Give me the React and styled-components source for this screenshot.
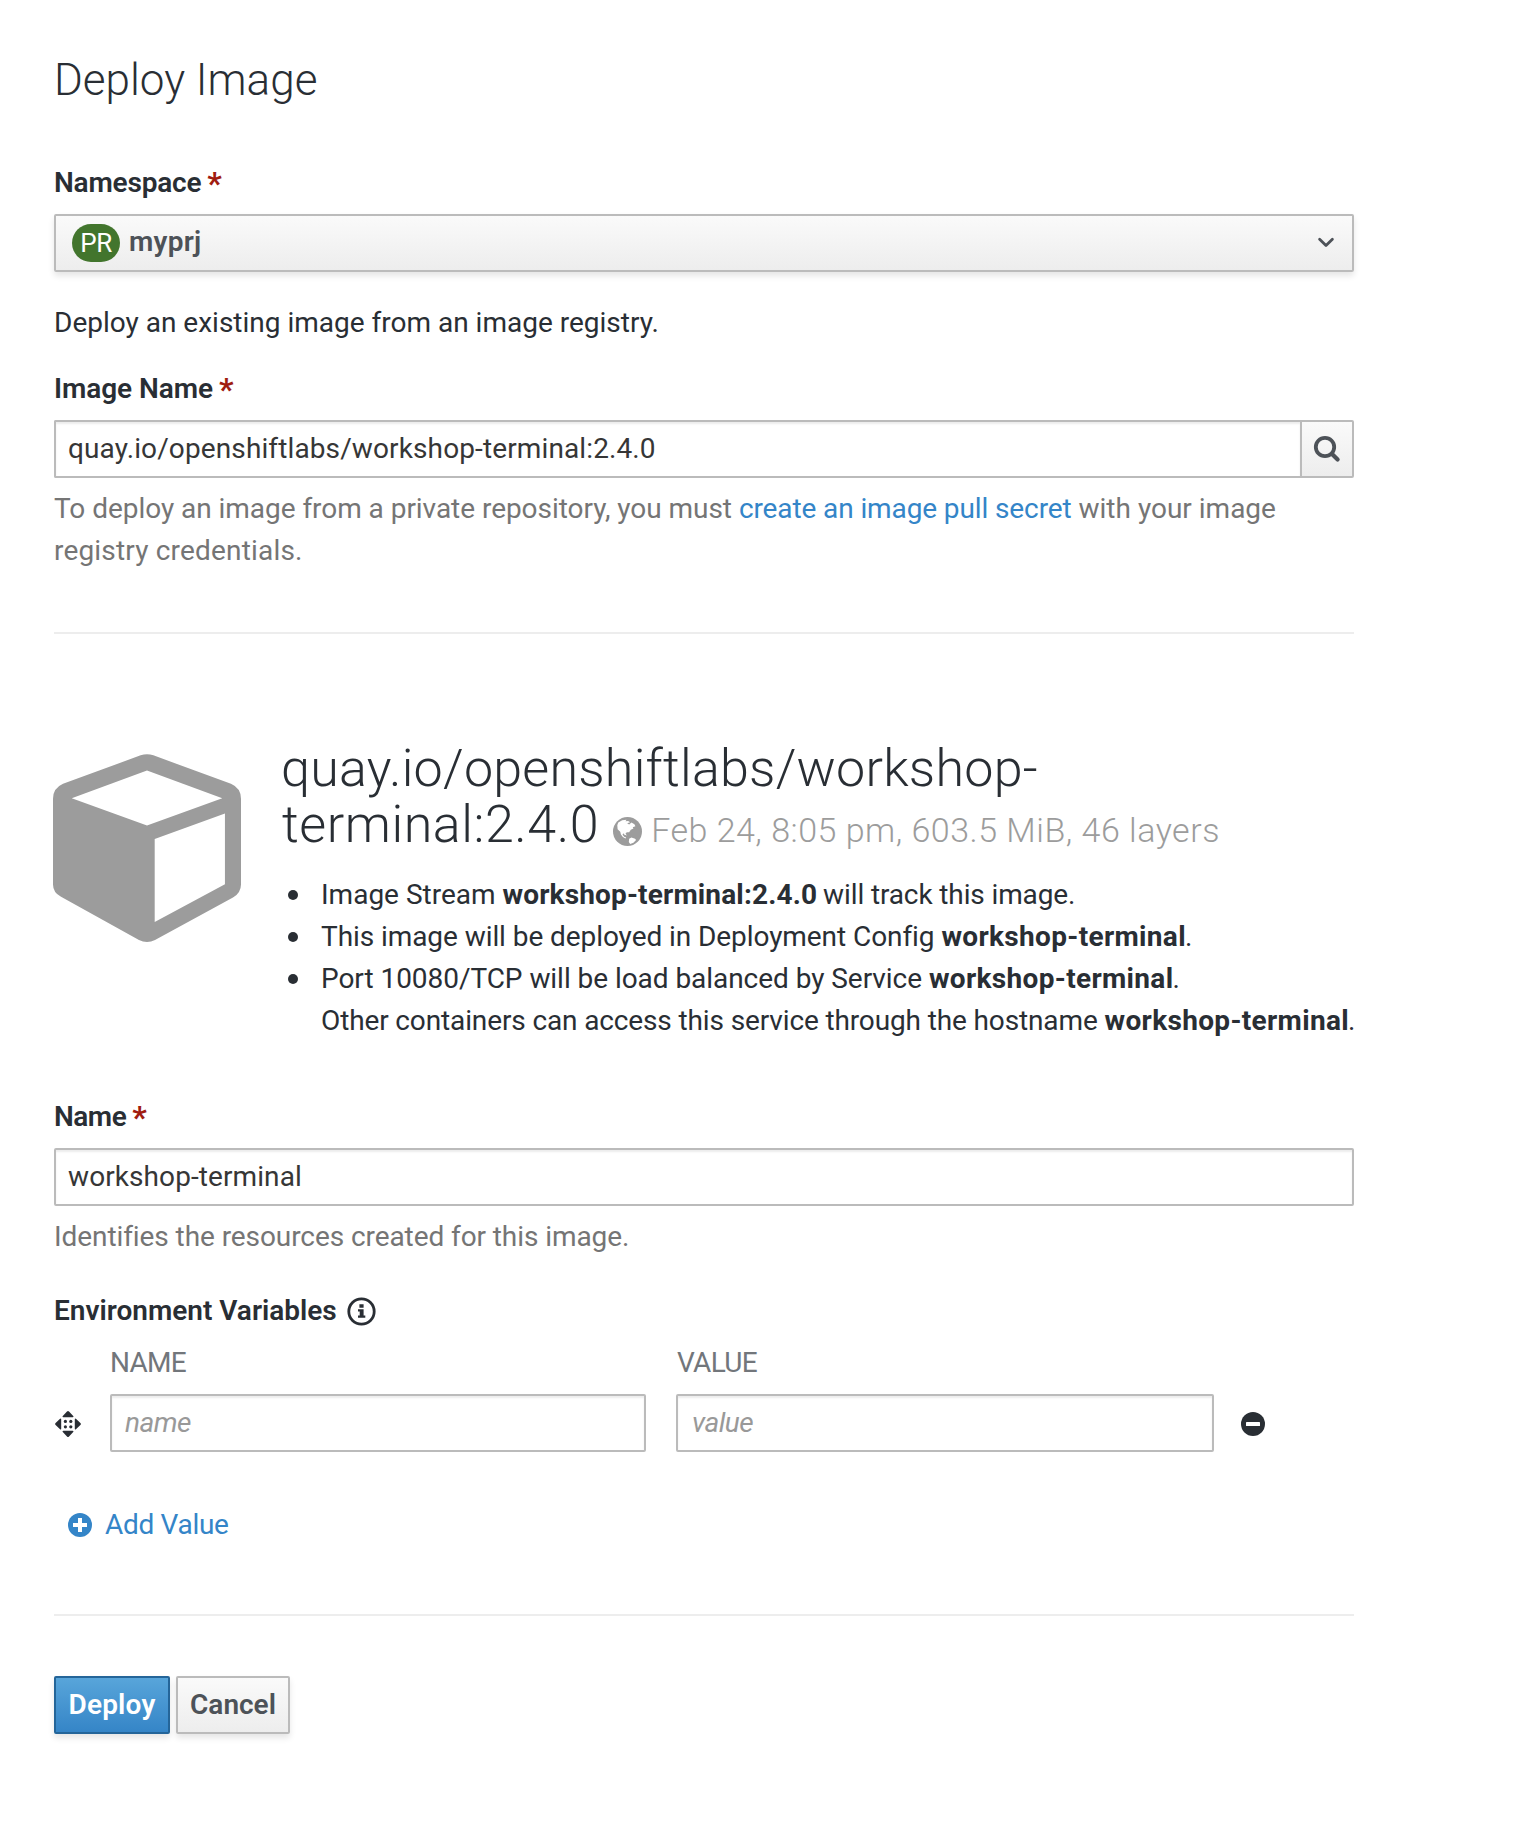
import React from "react";
import styled, { createGlobalStyle, css } from "styled-components";

const GlobalStyle = createGlobalStyle`
  *, *::before, *::after { box-sizing: border-box; }
  body {
    margin: 0;
    background: #fff;
    color: #292e34;
    font-family: Roboto, "Liberation Sans", sans-serif;
    font-size: 28px;
    line-height: 42px;
  }
  svg { display: block; flex: none; }
`;

const Page = styled.main`
  width: 1354px;
  min-height: 1824px;
  padding: 56px 0 0 54px;
`;

const Title = styled.h1`
  margin: 0 0 58px;
  font-size: 44px;
  font-weight: 300;
  line-height: 48px;
`;

const Track = styled.span`
  letter-spacing: ${(p) => p.$ls}px;
  white-space: nowrap;
`;

const Label = styled.label`
  display: flex;
  align-items: center;
  width: fit-content;
  margin-bottom: 10px;
  font-weight: 600;
  letter-spacing: ${(p) => p.$ls || 0}px;
`;

const Required = styled.span`
  margin-left: 6px;
  color: #a01c10;
  font-weight: 700;
  font-size: 32px;
  letter-spacing: 0;
`;

const grey = css`
  background: linear-gradient(#fafafa, #ededed);
  border: 2px solid #bbb;
  color: #4d5258;
`;

const Select = styled.button`
  ${grey}
  display: flex;
  align-items: center;
  width: 100%;
  height: 58px;
  padding: 0 17px 2px 16px;
  border-radius: 2px;
  box-shadow: 0 4px 6px rgba(3, 3, 3, 0.1);
  font: 600 28px/38px Roboto, sans-serif;
  letter-spacing: 0.24px;
  svg { margin: 1px 0 0 auto; }
`;

const Badge = styled.span`
  width: 48px;
  height: 38px;
  margin: 1px 9px 0 0;
  border-radius: 20px;
  background: #42752d;
  color: #fff;
  font-size: 26px;
  font-weight: 400;
  letter-spacing: -0.5px;
  text-align: center;
`;

const Intro = styled.p`
  margin: 30px 0 24px;
`;

const Input = styled.input`
  display: block;
  width: ${(p) => p.$w || "100%"};
  height: 58px;
  padding: 0 12px 2px ${(p) => p.$pl || 12}px;
  border: 2px solid #bbb;
  border-radius: 2px;
  background: #fff;
  box-shadow: inset 0 2px 2px rgba(3, 3, 3, 0.075);
  color: #363636;
  font: 400 28px Roboto, sans-serif;
  letter-spacing: ${(p) => p.$ls || 0}px;
  outline: none;
  &::placeholder { color: #999; font-style: italic; opacity: 1; }
`;

const InputGroup = styled.div`
  display: flex;
  input { flex: 1; border-right: 0; border-radius: 2px 0 0 2px; }
`;

const SearchButton = styled.button`
  ${grey}
  display: flex;
  align-items: center;
  justify-content: center;
  width: 54px;
  height: 58px;
  padding: 0;
  border-radius: 0 2px 2px 0;
`;

const Help = styled.p`
  margin: 10px 0 ${(p) => p.$mb}px;
  color: #757575;
`;

const Link = styled.a`
  color: #3485c8;
  letter-spacing: -0.11px;
`;

const Divider = styled.hr`
  height: 2px;
  margin: 0 0 ${(p) => p.$mb}px;
  border: 0;
  background: #ededed;
`;

const ImageResult = styled.section`
  display: flex;
  margin-bottom: 54px;
  > svg { margin: 13px 40px 0 -1px; }
`;

const ImageInfo = styled.div`
  flex: 1;
  white-space: nowrap;
`;

const ImageTitle = styled.h2`
  margin: 0 0 21px;
  font-size: 52px;
  font-weight: 300;
  line-height: 56px;
`;

const TitleLine = styled.div`
  display: flex;
  align-items: baseline;
  height: 56px;
  padding-left: ${(p) => p.$indent || 0}px;
`;

const ImageMeta = styled.small`
  display: flex;
  align-items: baseline;
  margin-left: 14px;
  color: #9c9c9c;
  font-size: 34px;
  letter-spacing: 0.5px;
  svg { align-self: center; margin: 2px 9px 0 0; }
`;

const FactList = styled.ul`
  margin: 0;
  padding: 0;
  list-style: none;
`;

const Fact = styled.li`
  display: grid;
  grid-template-columns: 40px auto;
  &::before {
    content: "";
    width: 10px;
    height: 10px;
    margin: 16px 0 0 7px;
    border-radius: 50%;
    background: #292e34;
  }
`;

const Strong = styled.strong`
  margin-right: -1px;
  font-weight: 700;
  letter-spacing: ${(p) => p.$ls || 0.33}px;
`;

const PairHead = styled.div`
  display: flex;
  padding-left: 57px;
  margin-bottom: 10px;
  color: #72767b;
  letter-spacing: -0.7px;
  text-transform: uppercase;
  span { width: 568px; margin-left: -1px; }
`;

const PairRow = styled.div`
  display: flex;
  align-items: center;
  margin-bottom: 52px;
  > svg:first-child { margin: 2px 29px 0 1px; }
  > svg:last-child { margin: 2px 0 0 27px; }
  input + input { margin-left: 30px; }
`;

const AddValue = styled.a`
  display: flex;
  align-items: center;
  gap: 13px;
  width: fit-content;
  margin: 0 0 68px 14px;
  color: #3485c8;
  letter-spacing: -0.3px;
  svg { margin-bottom: 1px; }
`;

const Actions = styled.div`
  display: flex;
  gap: 6px;
`;

const Button = styled.button`
  ${grey}
  ${(p) =>
    p.$primary &&
    css`
      background: linear-gradient(#58a5da, #3585c7);
      border-color: #246599;
      color: #fff;
    `}
  width: ${(p) => p.$w}px;
  height: 58px;
  padding: 0 0 2px;
  border-radius: 2px;
  box-shadow: 0 4px 6px rgba(3, 3, 3, 0.1);
  font: 600 28px Roboto, sans-serif;
  letter-spacing: ${(p) => p.$ls || 0}px;
`;

const Chevron = () => (
  <svg width="18" height="12" viewBox="0 0 18 12" fill="none" stroke="#4d5258" strokeWidth="2.8" strokeLinecap="round" strokeLinejoin="round">
    <path d="M2.6 2.2 9 8.6l6.400-6.400" />
  </svg>
);

const SearchIcon = () => (
  <svg width="28" height="28" viewBox="0 0 28 28" fill="none" stroke="#4d5258" strokeLinecap="round">
    <circle cx="12" cy="12" r="9.200" strokeWidth="3.800" />
    <path d="m19 19 5.600 5.600" strokeWidth="4.200" />
  </svg>
);

const CubeIcon = () => (
  <svg width="188" height="188" viewBox="40 70 562 562" fill="#9c9c9c" fillRule="evenodd">
    <path d="M302 74Q321 67 340 74L572 159Q602 172 602 204V460Q602 485 578 499L345 626Q321 638 297 626L64 497Q40 484 40 460V204Q40 172 70 159ZM96 202 321 284 546 202 321 119ZM344 324V572L554 459V248Z" />
  </svg>
);

const GlobeIcon = () => (
  <svg width="29" height="29" viewBox="70 45 88 88">
    <circle cx="114" cy="89" r="44" fill="#9c9c9c" />
    <path
      fill="#fff"
      d="M86 62 98 55 111 53 108 58 116 57 122 61 113 64 119 68 126 62 135 67 138 73 130 76 132 80 124 84 119 91 112 91 108 95 112 101 105 99 101 94 99 99 104 105 110 107 108 110 100 106 94 98 92 90 84 82 83 70ZM119 111 126 107 137 111 140 115 132 123 122 127 118 121Z"
    />
  </svg>
);

const InfoIcon = () => (
  <svg width="29" height="29" viewBox="0 0 29 29" style={{ marginLeft: 10 }}>
    <circle cx="14.500" cy="14.500" r="12.700" fill="none" stroke="#292e34" strokeWidth="2.800" />
    <path fill="#292e34" d="M12.400 7.200h4.200v3.600h-4.200zM11 12.200h5.600v6.200h1.700v2.400H11v-2.400h1.700v-3.800H11z" />
  </svg>
);

const MoveIcon = () => (
  <svg width="26" height="26" viewBox="0 0 26 26" fill="#292e34">
    <path d="M12 .6q1-1 2 0l4 4.200q1.200 1.400-.4 1.400H8.400q-1.600 0-.4-1.400zM12 25.400q1 1 2 0l4-4.200q1.200-1.400-.4-1.400H8.400q-1.600 0-.4 1.400zM.6 12q-1 1 0 2l4.200 4q1.400 1.200 1.400-.4V8.400q0-1.600-1.400-.4zM25.400 12q1 1 0 2l-4.200 4q-1.400 1.200-1.400-.4V8.400q0-1.600 1.400-.4z" />
    {[10.4, 15.8].map((x) => [10.4, 15.8].map((y) => <circle key={`${x}-${y}`} cx={x} cy={y} r="1.600" />))}
  </svg>
);

const MinusIcon = () => (
  <svg width="24" height="24" viewBox="0 0 24 24">
    <circle cx="12" cy="12" r="12" fill="#292e34" />
    <rect x="5" y="10" width="14" height="4" rx=".6" fill="#fff" />
  </svg>
);

const PlusIcon = () => (
  <svg width="24" height="24" viewBox="0 0 24 24">
    <circle cx="12" cy="12" r="12" fill="#3485c8" />
    <path fill="#fff" d="M10 5h4v5h5v4h-5v5h-4v-5H5v-4h5z" />
  </svg>
);

export default function App() {
  return (
    <>
      <GlobalStyle />
      <Page>
        <Title>Deploy Image</Title>

        <Label $ls={-0.2}>
          Namespace<Required>*</Required>
        </Label>
        <Select type="button">
          <Badge>PR</Badge>
          myprj
          <Chevron />
        </Select>

        <Intro>Deploy an existing image from an image registry.</Intro>

        <Label $ls={-0.06}>
          Image Name<Required>*</Required>
        </Label>
        <InputGroup>
          <Input defaultValue="quay.io/openshiftlabs/workshop-terminal:2.4.0" $ls={0.12} />
          <SearchButton type="button" aria-label="Search">
            <SearchIcon />
          </SearchButton>
        </InputGroup>
        <Help $mb={60}>
          <Track $ls={-0.04}>To deploy an image from a private repository, you must</Track>{" "}
          <Link>create an image pull secret</Link> with your image
          <br />
          <Track $ls={0.18}>registry credentials.</Track>
        </Help>

        <Divider $mb={107} />

        <ImageResult>
          <CubeIcon />
          <ImageInfo>
            <ImageTitle>
              <TitleLine>
                <Track $ls={0.23}>quay.io/openshiftlabs/workshop-</Track>
              </TitleLine>
              <TitleLine $indent={1}>
                <Track $ls={0.55}>terminal:2.4.0</Track>
                <ImageMeta>
                  <GlobeIcon />
                  Feb 24, 8:05 pm, 603.5 MiB, 46 layers
                </ImageMeta>
              </TitleLine>
            </ImageTitle>
            <FactList>
              <Fact>
                <div>
                  Image Stream <Strong $ls={0.15}>workshop-terminal:2.4.0</Strong> <Track $ls={-0.12}>will track this image.</Track>
                </div>
              </Fact>
              <Fact>
                <div>
                  <Track $ls={-0.07}>This image will be deployed in Deployment Config</Track> <Strong>workshop-terminal</Strong>.
                </div>
              </Fact>
              <Fact>
                <div>
                  <Track $ls={-0.05}>Port 10080/TCP will be load balanced by Service</Track> <Strong>workshop-terminal</Strong>.
                  <br />
                  <Track $ls={-0.13}>Other containers can access this service through the hostname</Track>{" "}
                  <Strong>workshop-terminal</Strong>.
                </div>
              </Fact>
            </FactList>
          </ImageInfo>
        </ImageResult>

        <Label $ls={-0.5}>
          Name<Required>*</Required>
        </Label>
        <Input defaultValue="workshop-terminal" $ls={0.09} />
        <Help $mb={32}>
          <Track $ls={-0.08}>Identifies the resources created for this image.</Track>
        </Help>

        <Label>
          Environment Variables
          <InfoIcon />
        </Label>
        <PairHead>
          <span>Name</span>
          <span>Value</span>
        </PairHead>
        <PairRow>
          <MoveIcon />
          <Input $w="536px" $pl={13} $ls={-0.5} placeholder="name" />
          <Input $w="538px" $pl={14} $ls={-0.5} placeholder="value" />
          <MinusIcon />
        </PairRow>
        <AddValue>
          <PlusIcon />
          Add Value
        </AddValue>

        <Divider $mb={60} />

        <Actions>
          <Button $primary $w={116} $ls={0.2}>Deploy</Button>
          <Button $w={114}>Cancel</Button>
        </Actions>
      </Page>
    </>
  );
}
